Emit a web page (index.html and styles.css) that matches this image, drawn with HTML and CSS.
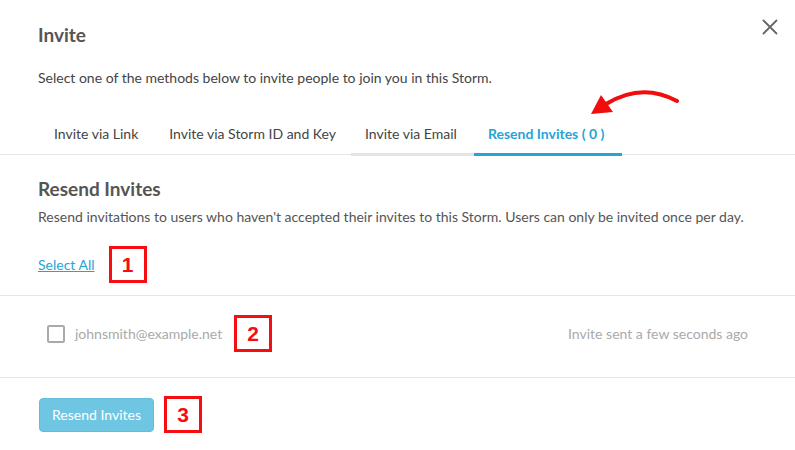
FILE: index.html
```html
<!DOCTYPE html>
<html>
<head>
<meta charset="utf-8">
<link rel="stylesheet" href="styles.css">
</head>
<body>
<div class="modal">
  <div class="header">
    <h1 class="title">Invite</h1>
    <button class="close" aria-label="Close">
      <svg width="16" height="16" viewBox="0 0 16 16"><path d="M1.5 1.5 L14.5 14.5 M14.5 1.5 L1.5 14.5" stroke="#666" stroke-width="1.8" stroke-linecap="round"/></svg>
    </button>
  </div>
  <p class="subtitle">Select one of the methods below to invite people to join you in this Storm.</p>
  <div class="tabs">
    <div class="tab">Invite via Link</div>
    <div class="tab">Invite via Storm ID and Key</div>
    <div class="tab hover">Invite via Email</div>
    <div class="tab active">Resend Invites ( 0 )</div>
  </div>
  <svg class="arrow" width="110" height="45" viewBox="580 80 110 45">
    <path d="M677 101 Q642 82 606 104" fill="none" stroke="#f20d0d" stroke-width="4" stroke-linecap="round"/>
    <polygon points="591,114 601,95 613,112" fill="#f20d0d"/>
  </svg>
  <div class="section">
    <h2 class="heading">Resend Invites</h2>
    <p class="desc">Resend invitations to users who haven't accepted their invites to this Storm. Users can only be invited once per day.</p>
    <div class="select-row">
      <a class="link" href="#">Select All</a>
      <span class="badge">1</span>
    </div>
  </div>
  <div class="item">
    <label class="item-left">
      <span class="checkbox"></span>
      <span class="email">johnsmith@example.net</span>
      <span class="badge">2</span>
    </label>
    <span class="sent">Invite sent a few seconds ago</span>
  </div>
  <div class="footer">
    <button class="btn">Resend Invites</button>
    <span class="badge">3</span>
  </div>
</div>
</body>
</html>
```

FILE: styles.css
```css
* { box-sizing: border-box; }
html, body { margin: 0; padding: 0; background: #fff; }
body {
  font-family: Lato, "Open Sans", "Liberation Sans", sans-serif;
  font-size: 14px;
  color: #4a4a4a;
}
.modal {
  position: relative;
  width: 795px;
  height: 450px;
  background: #fff;
}
.header {
  display: flex;
  justify-content: space-between;
  align-items: center;
  padding: 24px 17px 0 38px;
  height: 46px;
}
.title {
  margin: 0;
  font-size: 19px;
  line-height: 22px;
  font-weight: 700;
  color: #555;
}
.close {
  border: 0;
  background: none;
  padding: 0;
  width: 16px;
  height: 16px;
  margin-top: -16px;
  display: flex;
}
.subtitle {
  margin: 23px 0 0 38px;
  line-height: 18px;
  color: #444;
}
.tabs {
  display: flex;
  margin-top: 30px;
  padding-left: 38px;
  border-bottom: 1px solid #e6e6e6;
  height: 38px;
}
.tab {
  padding: 8px 15px 9px 16px;
  line-height: 18px;
  color: #444;
  border-bottom: 3px solid transparent;
  height: 39px;
  margin-bottom: -2px;
  white-space: nowrap;
}
.tab.hover { border-bottom-color: #e4e4e4; padding-left: 14px; padding-right: 17px; }
.tab.active { color: #27a4d6; font-weight: 700; border-bottom-color: #27a4d6; padding-left: 14px; padding-right: 18px; }
.arrow {
  position: absolute;
  left: 580px;
  top: 80px;
}
.section {
  padding: 23px 38px 0;
  height: 141px;
  border-bottom: 1px solid #e6e6e6;
}
.heading {
  margin: 0;
  font-size: 19px;
  line-height: 22px;
  font-weight: 700;
  color: #555;
}
.desc {
  margin: 8px 0 0;
  line-height: 18px;
  color: #555;
}
.select-row {
  display: flex;
  align-items: center;
  gap: 14px;
  margin-top: 20px;
}
.link {
  color: #27a4d6;
  text-decoration: underline;
}
.badge {
  width: 38px;
  height: 37px;
  border: 3px solid #f50d12;
  display: flex;
  align-items: center;
  justify-content: center;
  font-family: "Liberation Sans", Arial, sans-serif;
  font-weight: 700;
  font-size: 21px;
  line-height: 1;
  color: #f50d12;
}
.item {
  display: flex;
  justify-content: space-between;
  align-items: center;
  height: 82px;
  padding: 0 47px 6px;
  border-bottom: 1px solid #e6e6e6;
}
.item-left {
  display: flex;
  align-items: center;
}
.checkbox {
  width: 18px;
  height: 18px;
  border: 2px solid #aaa;
  border-radius: 2px;
  margin-right: 10px;
}
.email { color: #aaa; margin-right: 12px; }
.sent { color: #aaa; }
.footer {
  display: flex;
  align-items: center;
  gap: 10px;
  padding: 18px 38px 0 39px;
}
.btn {
  width: 115px;
  height: 34px;
  background: #6ec6e3;
  border: 1px solid #62bddc;
  border-radius: 4px;
  color: #fff;
  font-family: inherit;
  font-size: 14px;
  padding: 0;
}
```
